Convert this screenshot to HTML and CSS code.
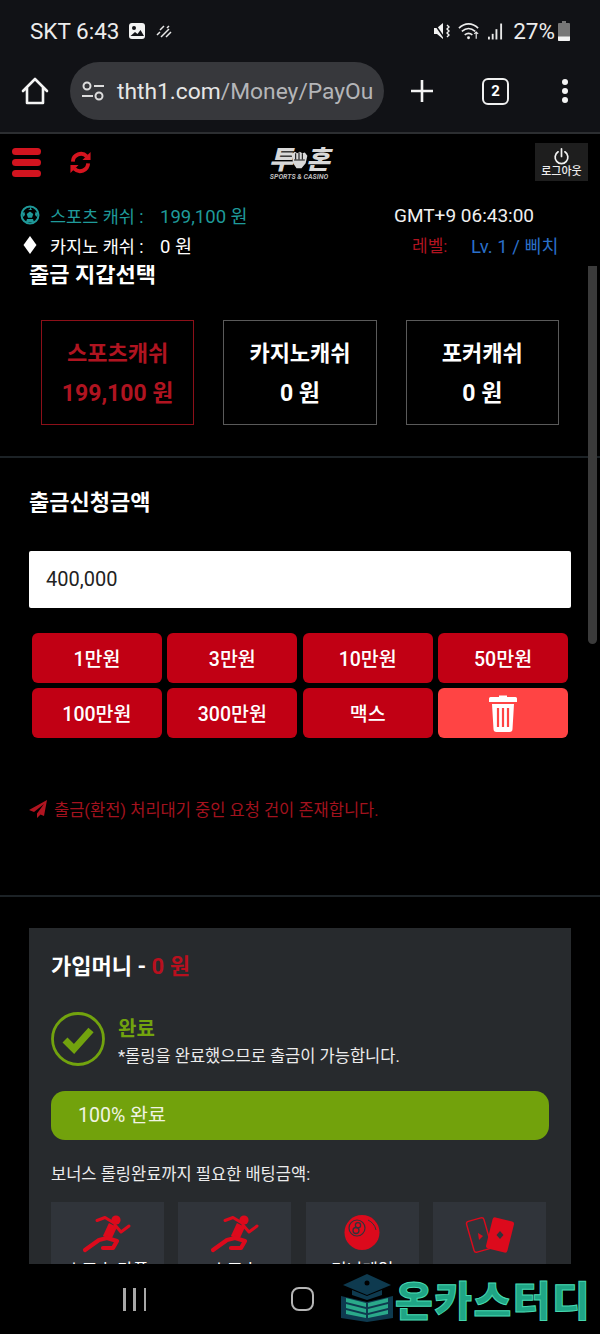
FILE: index.html
```html
<!DOCTYPE html>
<html lang="ko">
<head>
<meta charset="utf-8">
<title>출금</title>
<link rel="stylesheet" href="styles.css">
</head>
<body>
<div class="phone">
  <header class="chrome">
    <div class="status">
      <div class="status-left">
        <span>SKT 6:43</span>
        <svg class="ic-gallery" viewBox="0 0 18 18"><rect x="1" y="1" width="16" height="16" rx="3" fill="#f2f2f2"/><circle cx="6" cy="6" r="2" fill="#111216"/><path d="M2.5 14l4.5-4 2.5 2 3-4 3.5 6z" fill="#111216"/></svg>
        <svg class="ic-data" viewBox="0 0 18 14"><path d="M2 11l3-3M6 13l8-8M5 6l4-4M11 13l5-5M12 4l2-2" stroke="#e8e8e8" stroke-width="1.5" fill="none"/></svg>
      </div>
      <div class="status-right">
        <svg class="ic-mute" viewBox="0 0 18 18"><path d="M1 6h3l6-5v16l-6-5H1z" fill="#f2f2f2"/><path d="M1 1l11 16" stroke="#111216" stroke-width="1.5"/><path d="M14 3l2 2-2 2 2 2-2 2 2 2-2 2" stroke="#f2f2f2" stroke-width="1.4" fill="none"/></svg>
        <svg class="ic-wifi" viewBox="0 0 24 18"><path d="M1 6c6-6 14-6 20 0M4 9.5c4.500-4 9.500-4 14 0M7 13c2.500-2 5.500-2 8 0" stroke="#ececec" stroke-width="1.700" fill="none"/><circle cx="11" cy="16" r="1.500" fill="#ececec"/><path d="M19 10v7M17 12l2-2 2 2" stroke="#ececec" stroke-width="1.200" fill="none"/></svg>
        <svg class="ic-signal" viewBox="0 0 16 17"><rect x="0" y="14" width="2" height="3" fill="#e8e8e8"/><rect x="4" y="11" width="2" height="6" fill="#e8e8e8"/><rect x="8" y="6" width="2" height="11" fill="#e8e8e8"/><rect x="13" y="0" width="2" height="17" fill="#e8e8e8"/></svg>
        <span>27%</span>
        <svg class="ic-batt" viewBox="0 0 12 20"><path d="M4 0h4v2h3a1 1 0 0 1 1 1v16a1 1 0 0 1-1 1H1a1 1 0 0 1-1-1V3a1 1 0 0 1 1-1h3z" fill="#777"/><path d="M0 15.500h12V19a1 1 0 0 1-1 1H1a1 1 0 0 1-1-1z" fill="#f2f2f2"/></svg>
      </div>
    </div>
    <div class="toolbar">
      <svg class="ic-home" viewBox="0 0 28 28"><path d="M2 14L14 2l12 12M6 11v15h16V11" stroke="#f4f4f4" stroke-width="2.600" fill="none" stroke-linejoin="round" stroke-linecap="round"/></svg>
      <div class="urlbar">
        <svg class="ic-tune" viewBox="0 0 24 20"><circle cx="6" cy="5" r="3.500" stroke="#ddd" stroke-width="2" fill="none"/><path d="M13 5h10M1 15h11" stroke="#ddd" stroke-width="2"/><circle cx="18" cy="15" r="3.500" stroke="#ddd" stroke-width="2" fill="none"/></svg>
        <span class="url"><b>thth1.com</b>/Money/PayOu</span>
      </div>
      <svg class="ic-plus" viewBox="0 0 24 24"><path d="M12 1v22M1 12h22" stroke="#f4f4f4" stroke-width="2.600"/></svg>
      <div class="tabs">2</div>
      <svg class="ic-more" viewBox="0 0 8 26"><circle cx="4" cy="4" r="3" fill="#f4f4f4"/><circle cx="4" cy="13" r="3" fill="#f4f4f4"/><circle cx="4" cy="22" r="3" fill="#f4f4f4"/></svg>
    </div>
  </header>

  <main class="web">
    <div class="site-head">
      <div class="topbar">
        <div class="top-left">
          <div class="burger"><i></i><i></i><i></i></div>
          <svg class="ic-sync" viewBox="0 0 24 24"><path d="M4 11a8.500 8.500 0 0 1 14.500-5.500" stroke="#d5141f" stroke-width="4" fill="none"/><path d="M22.500 1v8.500H14z" fill="#d5141f"/><path d="M20 13a8.500 8.500 0 0 1-14.500 5.500" stroke="#d5141f" stroke-width="4" fill="none"/><path d="M1.500 23v-8.500H10z" fill="#d5141f"/></svg>
        </div>
        <div class="logo">
          <div class="logo-main">
            <span>투</span>
            <svg class="ic-fist" viewBox="0 0 24 24"><path d="M3 5l4-3 3 2 3-2 3 2 3-1 3 4-2 9-5 6H9l-4-6z" fill="#d8d8d8"/><path d="M8 4v7M12 3v8M16 4v7M6 12h13" stroke="#111" stroke-width="1.300"/></svg>
            <span>혼</span>
          </div>
          <div class="logo-sub">SPORTS &amp; CASINO</div>
        </div>
        <div class="top-right">
          <div class="logout">
            <svg class="ic-power" viewBox="0 0 20 20"><path d="M6 4.500a7.500 7.500 0 1 0 8 0M10 1v9" stroke="#f2f2f2" stroke-width="2" fill="none" stroke-linecap="round"/></svg>
            <span>로그아웃</span>
          </div>
        </div>
      </div>
      <div class="info">
        <div class="info-row">
          <div class="info-left teal">
            <svg class="info-ic" viewBox="0 0 20 20"><circle cx="10" cy="10" r="8.500" stroke="#1f9a9a" stroke-width="2" fill="none"/><path d="M10 6.500l3.300 2.400-1.300 3.900H8l-1.300-3.900zM10 1.500v2.500l-2 1h4zM2 8l2.500-1 .5 3-2 2zM18 8l-2.500-1-.5 3 2 2zM6 17l1-3h6l1 3z" fill="#1f9a9a"/></svg>
            <span class="info-label">스포츠 캐쉬 :</span><span>199,100 원</span>
          </div>
          <div class="info-right">GMT+9 06:43:00</div>
        </div>
        <div class="info-row">
          <div class="info-left">
            <svg class="info-ic" viewBox="0 0 20 20"><path d="M10 1l6.500 9-6.500 9-6.500-9z" fill="#fff"/></svg>
            <span class="info-label">카지노 캐쉬 :</span><span>0 원</span>
          </div>
          <div class="info-right level"><span class="lv-label">레벨:</span><span class="lv-value">Lv. 1 / 삐치</span></div>
        </div>
      </div>
    </div>

    <div class="scroll">
      <div class="scroll-inner">
        <section class="wallet">
          <h2 class="h-wallet">출금 지갑선택</h2>
          <div class="cards">
            <div class="card active"><div>스포츠캐쉬</div><div class="card-val">199,100 원</div></div>
            <div class="card"><div>카지노캐쉬</div><div class="card-val">0 원</div></div>
            <div class="card"><div>포커캐쉬</div><div class="card-val">0 원</div></div>
          </div>
        </section>
        <section class="request">
          <h2 class="h-request">출금신청금액</h2>
          <div class="amount">400,000</div>
          <div class="quick">
            <div class="qbtn">1만원</div>
            <div class="qbtn">3만원</div>
            <div class="qbtn">10만원</div>
            <div class="qbtn">50만원</div>
            <div class="qbtn">100만원</div>
            <div class="qbtn">300만원</div>
            <div class="qbtn">맥스</div>
            <div class="qbtn clear">
              <svg class="ic-trash" viewBox="0 0 28 38"><path d="M10 3V1.500h8V3h8.500a1.500 1.500 0 0 1 1.500 1.500V8H0V4.500A1.500 1.500 0 0 1 1.500 3z" fill="#fff"/><path d="M3 10h22l-1.500 25a3 3 0 0 1-3 3h-13a3 3 0 0 1-3-3z" fill="#fff"/><path d="M9 14v19M14 14v19M19 14v19" stroke="#ff4444" stroke-width="2.200"/></svg>
            </div>
          </div>
          <p class="notice">
            <svg class="ic-plane" viewBox="0 0 18 18"><path d="M18 0L0 10l5 2L15 4 8 13.500V18l3.500-3.500 3.500 1.500z" fill="#b01420"/></svg>
            <span>출금(환전) 처리대기 중인 요청 건이 존재합니다.</span>
          </p>
        </section>
        <section class="panel">
          <h3 class="panel-title">가입머니 - <em>0 원</em></h3>
          <div class="done">
            <svg class="ic-check" viewBox="0 0 54 54"><circle cx="27" cy="27" r="25.500" stroke="#72a30e" stroke-width="2.800" fill="none"/><path d="M14 28l9 9 17-19" stroke="#72a30e" stroke-width="7" fill="none"/></svg>
            <div class="done-text">
              <div class="done-title">완료</div>
              <div class="done-sub">*롤링을 완료했으므로 출금이 가능합니다.</div>
            </div>
          </div>
          <div class="progress">100% 완료</div>
          <p class="bonus">보너스 롤링완료까지 필요한 배팅금액:</p>
          <div class="tiles">
            <div class="tile">
              <svg class="tile-ic" viewBox="0 0 50 44"><circle cx="34" cy="8" r="4.600" fill="#dc0a1c"/><path d="M31 13L25 26" stroke="#dc0a1c" stroke-width="9" fill="none"/><g stroke="#dc0a1c" stroke-width="4.200" fill="none" stroke-linecap="round" stroke-linejoin="round"><path d="M25 26L17 28L3 38"/><path d="M25 26L35 29L31 36L21 36"/></g><g stroke="#dc0a1c" stroke-width="3" fill="none" stroke-linecap="round" stroke-linejoin="round"><path d="M32 11L23 5.500L15 8.500"/><path d="M33 13L39 20L47 14"/></g></svg>
              <div class="tile-label">스포츠 다폴</div>
            </div>
            <div class="tile">
              <svg class="tile-ic" viewBox="0 0 50 44"><circle cx="34" cy="8" r="4.600" fill="#dc0a1c"/><path d="M31 13L25 26" stroke="#dc0a1c" stroke-width="9" fill="none"/><g stroke="#dc0a1c" stroke-width="4.200" fill="none" stroke-linecap="round" stroke-linejoin="round"><path d="M25 26L17 28L3 38"/><path d="M25 26L35 29L31 36L21 36"/></g><g stroke="#dc0a1c" stroke-width="3" fill="none" stroke-linecap="round" stroke-linejoin="round"><path d="M32 11L23 5.500L15 8.500"/><path d="M33 13L39 20L47 14"/></g></svg>
              <div class="tile-label">스포츠</div>
            </div>
            <div class="tile">
              <svg class="tile-ic" viewBox="0 0 50 44"><circle cx="25" cy="20.500" r="17.500" fill="#dc0a1c"/><circle cx="20" cy="16" r="8" stroke="#30343a" stroke-width="1.200" fill="none"/><circle cx="21" cy="13.300" r="2.600" stroke="#30343a" stroke-width="1.300" fill="none"/><circle cx="19" cy="18.500" r="3" stroke="#30343a" stroke-width="1.300" fill="none"/><path d="M31 8c4 2 7 5 8 10" stroke="#30343a" stroke-width="1" fill="none"/></svg>
              <div class="tile-label">미니게임</div>
            </div>
            <div class="tile">
              <svg class="tile-ic" viewBox="0 0 50 44"><rect x="5" y="7" width="18" height="32" rx="2.500" transform="rotate(-16 14 23)" stroke="#dc0a1c" stroke-width="1.400" fill="none"/><rect x="24" y="7" width="22" height="32" rx="2.500" transform="rotate(14 35 23)" fill="#dc0a1c"/><path d="M35 19l3.500 4-3.500 4-3.500-4z" fill="#30343a"/><path d="M13 21l5 3-4 4z" fill="#dc0a1c"/></svg>
            </div>
          </div>
        </section>
      </div>
      <div class="scrollbar"></div>
    </div>
  </main>

  <nav class="navbar">
    <div class="nav-recent"><i></i><i></i><i></i></div>
    <div class="nav-home"></div>
    <div class="brand">
      <svg class="brand-ic" viewBox="0 0 54 48"><path d="M27 0L3 11l24 10 24-10z" fill="#0e3a4f"/><path d="M12 16v5l15 5 15-5v-5l-15 6z" fill="#0e3a4f"/><circle cx="27" cy="9" r="2.500" fill="#000"/><path d="M1 22l26 6 26-6v22l-26 4-26-4z" fill="#0e3a4f"/><path d="M6 24l20 5v4L6 28zM6 30l20 5v4L6 34zM6 36l20 5v3L6 40zM48 24l-20 5v4l20-5zM48 30l-20 5v4l20-5zM48 36l-20 5v3l20-4z" fill="#2aa98a"/></svg>
      <span class="brand-name">온카스터디</span>
    </div>
  </nav>
</div>
</body>
</html>
```
FILE: styles.css
```css
* { box-sizing: border-box; }
html, body { margin: 0; padding: 0; background: #000; }
body { font-family: Roboto, "Noto Sans CJK KR", sans-serif; color: #fff; }
h2, h3, p { margin: 0; }
.phone { width: 600px; height: 1334px; display: flex; flex-direction: column; overflow: hidden; background: #000; }

/* browser chrome */
.chrome { height: 134px; background: #111216; border-bottom: 2px solid #2c2e31; flex: none; }
.status { height: 62px; padding: 17px 30px 0 30px; display: flex; justify-content: space-between; align-items: flex-start; font-size: 22.500px; line-height: 28px; color: #ececec; }
.status-left, .status-right { display: flex; align-items: center; }
.ic-gallery { width: 18px; height: 18px; margin-left: 9px; }
.ic-data { width: 18px; height: 14px; margin-left: 9px; }
.ic-mute { width: 18px; height: 18px; margin-right: 7px; }
.ic-wifi { width: 23px; height: 18px; margin-right: 7px; }
.ic-signal { width: 15px; height: 17px; margin-right: 10px; }
.ic-batt { width: 12px; height: 20px; margin-left: 3px; }
.toolbar { height: 58px; display: flex; align-items: center; padding-left: 21px; }
.ic-home { width: 28px; height: 28px; flex: none; }
.urlbar { width: 314px; height: 58px; margin-left: 21px; border-radius: 29px; background: #37383c; display: flex; align-items: center; padding-left: 11px; flex: none; overflow: hidden; }
.ic-tune { width: 24px; height: 20px; flex: none; }
.url { margin-left: 12px; font-size: 22.800px; color: #b4b5b8; white-space: nowrap; }
.url b { font-weight: 400; color: #e6e6e6; }
.ic-plus { width: 24px; height: 24px; margin-left: 26px; flex: none; }
.tabs { width: 27px; height: 27px; margin-left: 48px; border: 2.500px solid #f0f0f0; border-radius: 6px; font-size: 15px; font-weight: 700; line-height: 22px; text-align: center; flex: none; }
.ic-more { width: 8px; height: 26px; margin-left: 52px; flex: none; }

/* site */
.web { height: 1130px; flex: none; display: flex; flex-direction: column; overflow: hidden; }
.site-head { height: 131px; flex: none; background: #000; }
.topbar { height: 60px; padding: 9px 12px 0; display: grid; grid-template-columns: 1fr auto 1fr; }
.top-left { display: flex; align-items: center; height: 38px; }
.burger { width: 29px; display: flex; flex-direction: column; gap: 4px; }
.burger i { display: block; height: 7px; border-radius: 4px; background: #d2141f; }
.ic-sync { width: 23px; height: 23px; margin-left: 28px; }
.logo { width: 66px; height: 38px; margin: 4px 0 0 -2px; display: flex; flex-direction: column; align-items: center; }
.logo-main { display: flex; align-items: center; justify-content: center; height: 26px; font-size: 26px; line-height: 26px; font-weight: 900; font-style: italic; color: #d8d8d8; letter-spacing: -1px; }
.ic-fist { width: 20px; height: 22px; margin: 0 -3px; flex: none; }
.logo-sub { font-size: 7px; line-height: 8px; font-weight: 700; font-style: italic; color: #bbb; white-space: nowrap; }
.top-right { display: flex; justify-content: flex-end; }
.logout { width: 53px; height: 38px; background: #1e1e1e; display: flex; flex-direction: column; align-items: center; padding-top: 5px; }
.ic-power { width: 17px; height: 17px; }
.logout span { font-size: 11px; line-height: 14px; font-weight: 500; color: #eee; white-space: nowrap; }
.info { padding: 6px 0 0 20px; }
.info-row { height: 30px; display: grid; grid-template-columns: 374px 1fr; align-items: center; font-size: 18.500px; }
.info-left { display: flex; align-items: center; color: #fff; }
.info-left.teal { color: #1f9a9a; }
.info-ic { width: 20px; height: 20px; margin-right: 10px; flex: none; }
.info-label { width: 110px; font-size: 17.500px; white-space: nowrap; }
.info-right { font-size: 19px; color: #f0f0f0; white-space: nowrap; }
.info-right.level { padding-left: 18px; font-size: 18.500px; display: flex; }
.lv-label { width: 59px; color: #b01420; font-size: 17px; }
.lv-value { color: #2a6fc9; }

.scroll { flex: 1; position: relative; overflow: hidden; }
.scroll-inner { margin-top: -5px; }
.scrollbar { position: absolute; top: 1px; right: 3px; width: 9px; height: 378px; border-radius: 0 0 5px 5px; background: #3b3b3b; }

.h-wallet { margin-left: 29px; font-size: 22px; line-height: 30px; font-weight: 700; }
.wallet { padding-bottom: 31px; border-bottom: 2px solid #1c2226; }
.cards { margin: 30px 41px 0; display: grid; grid-template-columns: repeat(3, 1fr); column-gap: 29px; }
.card { height: 105px; border: 1.500px solid #5a5a5a; display: flex; flex-direction: column; align-items: center; padding-top: 16px; gap: 6px; font-size: 22px; line-height: 34px; font-weight: 700; white-space: nowrap; }
.card-val { font-size: 23px; }
.card.active { border-color: #8c1019; color: #b01420; }

.request { padding: 30px 0 74px; border-bottom: 2px solid #1c2226; }
.h-request { margin-left: 29px; font-size: 22px; line-height: 30px; font-weight: 700; }
.amount { margin: 33px 29px 0; height: 57px; background: #fff; border-radius: 2px; padding-left: 17px; color: #222; font-size: 20px; line-height: 57px; }
.quick { margin: 25px 32px 0; display: grid; grid-template-columns: repeat(4, 1fr); gap: 5px 5.500px; }
.qbtn { height: 50px; border-radius: 6px; background: #c10014; display: flex; align-items: center; justify-content: center; padding-bottom: 2px; font-size: 19.500px; font-weight: 500; }
.qbtn.clear { background: #ff4444; padding-bottom: 0; }
.ic-trash { width: 28px; height: 38px; }
.notice { margin: 59px 0 0 29px; display: flex; align-items: center; height: 24px; font-size: 16.500px; color: #a3121e; }
.ic-plane { width: 18px; height: 18px; margin-right: 7px; }

.panel { margin: 31px 29px 0; padding: 24px 22px 0; background: #272a2d; height: 400px; }
.panel-title { font-size: 22px; line-height: 30px; font-weight: 700; }
.panel-title em { font-style: normal; color: #b8101e; }
.done { margin-top: 30px; height: 53px; display: flex; align-items: flex-start; }
.ic-check { width: 54px; height: 54px; flex: none; }
.done-text { margin: 3px 0 0 13px; }
.done-title { font-size: 20px; line-height: 28px; font-weight: 700; color: #72a30e; }
.done-sub { font-size: 16.500px; line-height: 28px; color: #ececec; }
.progress { margin: 26px 0 0; width: 498px; height: 49px; border-radius: 14px; background: #72a20c; padding-left: 27px; font-size: 19.500px; line-height: 50px; color: #f0f4e4; }
.bonus { margin-top: 23px; font-size: 16.500px; line-height: 24px; color: #ececec; }
.tiles { margin-top: 15px; width: 495px; display: grid; grid-template-columns: repeat(4, 1fr); column-gap: 14.500px; }
.tile { height: 110px; background: #30343a; display: flex; flex-direction: column; align-items: center; padding-top: 10px; }
.tile-ic { width: 50px; height: 44px; }
.tile-label { margin-top: 3px; font-size: 17px; line-height: 22px; white-space: nowrap; }

/* system nav */
.navbar { flex: 1; position: relative; background: #000; }
.nav-recent { position: absolute; left: 123px; top: 24px; width: 23px; height: 23px; display: flex; justify-content: space-between; }
.nav-recent i { display: block; width: 2.500px; background: #a8a8a8; }
.nav-home { position: absolute; left: 291px; top: 23px; width: 23px; height: 24px; border: 2.500px solid #b5b5b5; border-radius: 8px; }
.brand { position: absolute; left: 340px; top: 9px; display: flex; align-items: center; }
.brand-ic { width: 54px; height: 48px; flex: none; }
.brand-name { margin-left: 1px; font-family: "Noto Sans CJK KR", sans-serif; font-size: 41px; line-height: 50px; font-weight: 900; letter-spacing: 1.500px; color: #1fa585; -webkit-text-stroke: 1px #46d8b0; white-space: nowrap; }
```
